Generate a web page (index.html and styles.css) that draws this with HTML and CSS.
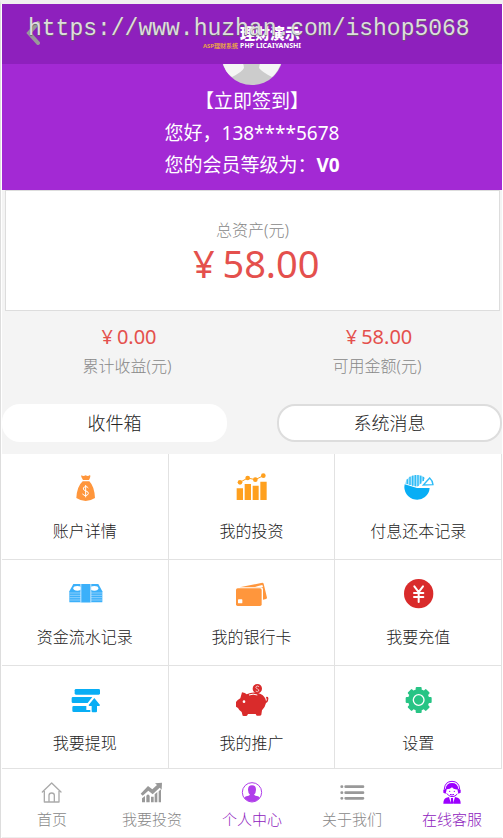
FILE: index.html
```html
<!DOCTYPE html>
<html lang="zh-CN">
<head>
<meta charset="utf-8">
<meta name="viewport" content="width=device-width, initial-scale=1">
<title>个人中心</title>
<link rel="stylesheet" href="styles.css">
</head>
<body>
<header class="topbar">
  <a class="back" href="#" aria-label="返回"><svg viewBox="0 0 14 24"><path d="M12 2 3 12l9 10" fill="none" stroke="#999" stroke-width="4" stroke-linecap="round"/></svg></a>
  <div class="logo">
    <span class="logo-side">ASP理财系统</span>
    <span class="logo-main"><b>理财演示</b><i>PHP LICAIYANSHI</i></span>
  </div>
  <span class="watermark">https://www.huzhan.com/ishop5068</span>
</header>

<main>
  <section class="hero">
    <svg class="avatar" viewBox="0 0 62 62"><circle cx="31" cy="31" r="31" fill="#ccc"/><path d="M1 37Q4 50 11 54q10-5 12-9 0-6-8-14H1zM61 37Q58 48 51 54q-10-5-13-9 0-6 9-14h14z" fill="#f5f5f5"/></svg>
    <a href="#">【立即签到】</a>
    <p>您好，138****5678</p>
    <p>您的会员等级为：<b>V0</b></p>
  </section>

  <section class="total">
    <p class="label">总资产(元)</p>
    <p class="sum"><span class="yen">¥</span>58.00</p>
  </section>

  <section class="stats">
    <div><p class="money"><span class="yen">¥</span>0.00</p><p class="label">累计收益(元)</p></div>
    <div><p class="money"><span class="yen">¥</span>58.00</p><p class="label">可用金额(元)</p></div>
  </section>

  <div class="messages">
    <button class="pill" type="button">收件箱</button>
    <button class="pill outlined" type="button">系统消息</button>
  </div>

  <nav class="menu">
    <a href="#"><svg viewBox="0 0 108 108" fill="#ff963c"><path d="M43 16q6 4 13 0 7 4 13-1 3 4-3 15H48q-7-11-5-14zM47 34h20q15 15 17 50-14 9-28 9t-28-9q2-35 19-50z"/><path d="M64 54q-3-5-9-4-7 1-6 7 1 4 8 6 8 2 7 8-2 6-9 6-7-1-8-6M56 45v37" fill="none" stroke="#fff" stroke-width="3"/></svg>账户详情</a>
    <a href="#"><svg viewBox="0 0 108 108" fill="#ffa01e"><path d="M11 55h19v35H11zM35 42h19v48H35zM59 47h18v43H59zM82 35h19v55H82z"/><path d="m21 37 23-13 23 5 24-12" fill="none" stroke="#ffa01e" stroke-width="3"/><circle cx="21" cy="37" r="7"/><circle cx="44" cy="24" r="7"/><circle cx="67" cy="29" r="7"/><circle cx="91" cy="17" r="7"/></svg>我的投资</a>
    <a href="#"><svg viewBox="0 0 108 108" fill="#08aef5"><path d="M15 41q6-26 36-26 16 0 25 10L53 50z" fill="#a5e2fb"/><path d="M22 28v14M30 20v25M38 17v30M46 15v34M54 15v33M62 17v24M70 21v12" stroke="#2ebcf7" stroke-width="4"/><path d="m14 43 37 11h38a38 38 0 1 1-75-11z"/><path d="M70 45 89 24q9 8 10 20z" fill="none" stroke="#2ebcf7" stroke-width="4"/></svg>付息还本记录</a>
    <a href="#"><svg viewBox="0 0 108 108" fill="#3bb0fa"><path d="M19 24h75l12 22v33H7V46z"/><ellipse cx="31" cy="37" rx="12" ry="7" fill="#fff"/><ellipse cx="82" cy="37" rx="12" ry="7" fill="#fff"/><path d="M8 51h98M8 58h98M8 65h98M8 72h98" stroke="#b5defd" stroke-width="2"/><path d="M40 24h33v55H40z" fill="#c8e7fe"/><path d="M43 24h27v55H43z"/></svg>资金流水记录</a>
    <a href="#"><svg viewBox="0 0 108 108" fill="#ff963c"><path d="m20 34 68-14q3 0 4 3l10 42q0 3-3 4l-9 2V40q0-6-6-6z"/><path d="m66 32 22-5 2 6-4 1z" fill="#fff"/><rect x="9" y="37" width="77" height="53" rx="5"/><rect x="15" y="70" width="13" height="12" rx="2" fill="#fff"/></svg>我的银行卡</a>
    <a href="#"><svg viewBox="0 0 108 108"><circle cx="56" cy="53" r="44" fill="#d92b2b"/><path d="m43 31 13 17 13-17M56 48v30M42 51h28M42 63h28" fill="none" stroke="#fff" stroke-width="6" stroke-linecap="round"/></svg>我要充值</a>
    <a href="#"><svg viewBox="0 0 108 108" fill="#08aef5"><rect x="23" y="21" width="76" height="17" rx="4"/><path d="M18 45h58L62 63H18q-4 0-4-4V49q0-4 4-4zM20 72h38v12h12v6H20q-4 0-4-4V76q0-4 4-4zM82 48l17 21q0 3-4 3h-5v16q0 3-3 3H77q-3 0-3-3V72h-6q-3 0-3-3z"/></svg>我要提现</a>
    <a href="#"><svg viewBox="0 0 108 108" fill="#d92b2b"><path d="M27 31q10 1 14 6 21-10 42-1 14 7 16 21 4-3 1-8-2-4 1-5 6 0 5 6l-1 7q-2 5-6 6-2 11-12 22l-2 13q-1 3-6 3h-8l-3-5H45l-3 5q-6 2-13 0l-3-11q-8-5-11-12l-6-4V60q4-6 13-11z"/><circle cx="33" cy="59" r="4" fill="#fff"/><path d="M48 39q12-5 25 0" fill="none" stroke="#fff" stroke-width="3"/><circle cx="73" cy="20" r="14"/><path d="M78 15q-2-4-6-3-5 2-3 6 1 2 5 3 5 2 3 6-3 4-9 0" fill="none" stroke="#fff" stroke-width="2"/></svg>我的推广</a>
    <a href="#"><svg viewBox="0 0 108 108"><g fill="#27c485"><circle cx="56" cy="54" r="32"/><rect id="tooth" x="47" y="15" width="18" height="78" rx="3"/><use href="#tooth" transform="rotate(45 56 54)"/><use href="#tooth" transform="rotate(90 56 54)"/><use href="#tooth" transform="rotate(135 56 54)"/></g><circle cx="56" cy="54" r="16" fill="none" stroke="#fff" stroke-width="4"/></svg>设置</a>
  </nav>
</main>

<nav class="tabs">
  <a href="#"><svg viewBox="0 0 72 72" fill="none" stroke="#aaa" stroke-width="4" stroke-linejoin="round" stroke-linecap="round"><path d="M7 36 35 9l28 27M13 33v33h44V33M27 66V46q0-7 8-7t8 7v20"/></svg>首页</a>
  <a href="#"><svg viewBox="0 0 72 72" fill="#999"><path d="M2 41 24 18l13 10 14-13-6-5 21-2-1 21-6-6-21 20-13-11L8 47z"/><path d="M6 55l9-7v19H6zM19 47l5-4 5 4v20H19zM33 50h8v17h-8zM44 43l8-7v31h-8zM56 34l7-6v39h-7z"/></svg>我要投资</a>
  <a class="on" href="#"><svg viewBox="0 0 72 72"><circle cx="36" cy="37" r="29" fill="none" stroke="#b03eea" stroke-width="3"/><path d="M36 16q12 0 12 13 0 9-6 15 3 4 12 5 3 1 5 5-9 11-23 11T13 54q2-4 6-5 8-1 11-5-6-6-6-15 0-13 12-13z" fill="#b03eea"/></svg>个人中心</a>
  <a href="#"><svg class="wide" viewBox="0 0 75 72" stroke="#999" stroke-width="8" stroke-linecap="round"><path d="M5 20h1M5 38h1M5 55h1M17 20h52M17 38h52M17 55h52"/></svg>关于我们</a>
  <a class="on" href="#"><svg viewBox="0 0 72 72" fill="#9b00ff"><path d="M13 27Q15 4 36 4t23 23" fill="none" stroke="#9b00ff" stroke-width="3"/><path d="M17 26Q19 9 36 9t19 17l7 3v9l-7 3-3-13q-12 1-16-6-5 6-16 6l-3 13-7-3v-9z"/><circle cx="29" cy="34" r="2"/><circle cx="43" cy="34" r="2"/><path d="M20 40q7 10 16 10 10 0 16-8M30 43q6 4 12 0" fill="none" stroke="#9b00ff" stroke-width="3"/><path d="M10 71q0-15 9-18l8-2 6 20zM62 71q0-15-9-18l-8-2-6 20zM33 54h6l1 17h-8z"/></svg>在线客服</a>
</nav>
</body>
</html>
```
FILE: styles.css
```css
* {
  box-sizing: border-box;
}

body {
  margin: 0;
  min-height: 100vh;
  padding: 0 1px 0 1px;
  border-top: 4px solid #f0f0f0;
  border-left: 1px solid #ddd;
  background: #fff;
  color: #222;
  font: 16px/24px "Noto Sans", "Noto Sans CJK SC", sans-serif;
  font-weight: 300;
}

p {
  margin: 0;
}

a {
  color: inherit;
  text-decoration: none;
}

.topbar {
  position: fixed;
  z-index: 2;
  top: 4px;
  left: 2px;
  right: 1px;
  height: 60px;
  display: flex;
  align-items: center;
  justify-content: center;
  background: #8e20bd;
}

.back {
  position: absolute;
  left: 24px;
  top: 17px;
}

.back svg {
  display: block;
  width: 14px;
  height: 24px;
}

.logo {
  display: flex;
  align-items: flex-end;
  gap: 2px;
  padding-top: 6px;
  color: #fff;
}

.logo-side {
  color: #e9a04a;
  font-size: 6px;
  line-height: 8px;
  font-weight: 700;
}

.logo-main {
  display: flex;
  flex-direction: column;
}

.logo-main b {
  font-size: 15px;
  line-height: 18px;
  font-weight: 900;
}

.logo-main i {
  font-size: 7px;
  line-height: 8px;
  font-style: normal;
  font-weight: 700;
}

.watermark {
  position: absolute;
  left: 26px;
  top: 11px;
  color: #ddd;
  font: 23px/28px "Liberation Mono", monospace;
  text-shadow: 0 1px 1px #666;
  pointer-events: none;
}

main {
  background: #f4f4f4;
}

.hero {
  display: flex;
  flex-direction: column;
  align-items: center;
  padding: 19px 0 9px;
  background: #a329d4;
  color: #fff;
  font-size: 19px;
  line-height: 32px;
  font-weight: 400;
}

.avatar {
  width: 62px;
  height: 62px;
}

.total {
  margin: 0 2px 0 3px;
  padding: 28px 0 25px;
  border: 1px solid #ddd;
  background: #fff;
  text-align: center;
}

.label {
  color: #888;
  line-height: 22px;
}

.sum,
.money {
  color: #e4504d;
  font-weight: 400;
}

.sum {
  font-size: 38px;
  line-height: 44px;
}

.yen {
  margin: 0 0.2em;
}

.stats {
  display: grid;
  grid-template-columns: 1fr 1fr;
  padding: 11px 0 24px;
  text-align: center;
}

.stats .label {
  line-height: 28px;
}

.money {
  font-size: 20px;
  line-height: 30px;
}

.messages {
  display: flex;
  justify-content: space-between;
  padding-bottom: 12px;
}

.pill {
  width: 45%;
  height: 38px;
  padding: 0;
  border: 0;
  border-radius: 18px;
  background: #fff;
  color: #222;
  font: inherit;
  font-size: 18px;
}

.outlined {
  border: 2px solid #ddd;
}

.menu {
  display: grid;
  grid-template-columns: repeat(3, 1fr);
  background: #fff;
}

.menu a {
  display: flex;
  flex-direction: column;
  align-items: center;
  gap: 13px;
  padding: 16px 0;
  border-right: 1px solid #e2e2e2;
  border-bottom: 1px solid #e2e2e2;
}

.menu svg {
  width: 36px;
  height: 36px;
}

.tabs {
  position: fixed;
  z-index: 2;
  left: 2px;
  right: 1px;
  bottom: 0;
  display: grid;
  grid-template-columns: repeat(5, 1fr);
  border-top: 1px solid #e2e2e2;
  border-bottom: 1px solid #eee;
  background: #fff;
  color: #888;
  font-size: 15px;
  line-height: 20px;
}

.tabs a {
  display: flex;
  flex-direction: column;
  align-items: center;
  gap: 5px;
  padding: 11px 0 8px;
}

.tabs svg {
  width: 24px;
  height: 24px;
}

.tabs .wide {
  width: 25px;
}

.tabs .on {
  color: #8e20bd;
}
```
